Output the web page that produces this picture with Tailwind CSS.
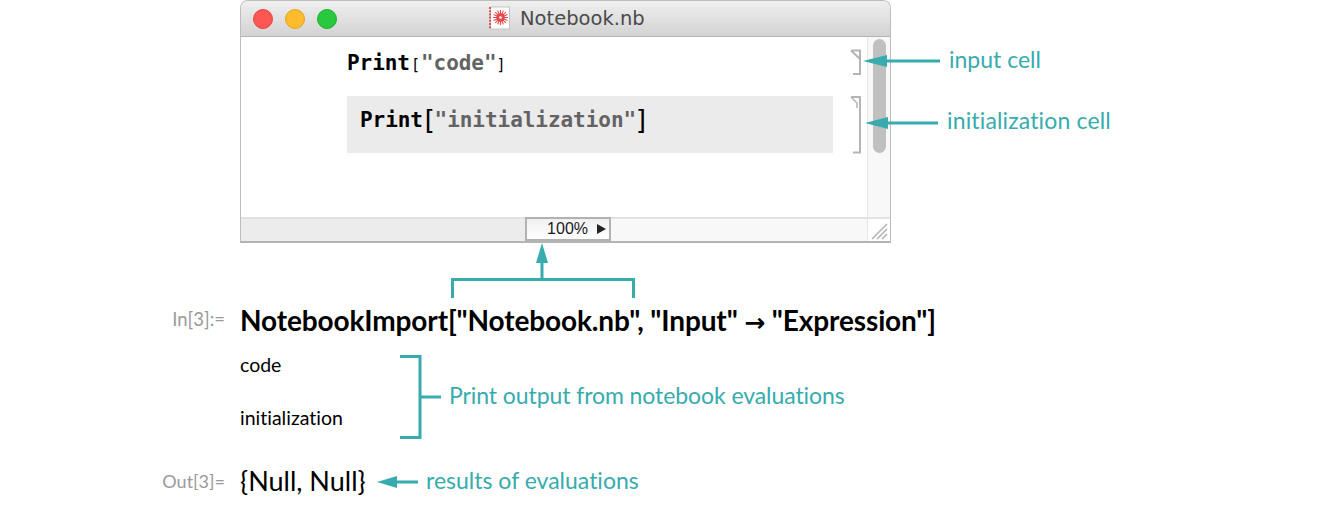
<!DOCTYPE html>
<html lang="en">
<head>
    <meta charset="UTF-8">
    <title>NotebookImport</title>
    <script src="https://cdn.jsdelivr.net/npm/@tailwindcss/browser@4"></script>
</head>
<body class="bg-white">
    <div class="relative w-[1340px] h-[510px] overflow-hidden font-['Lato',sans-serif] [font-variant-ligatures:none]">

        <!-- notebook window -->
        <div class="ml-[240px] w-[651px] h-[243px] flex flex-col border border-[#bdbdbd] border-b-2 border-b-[#b4b4b4] rounded-t-[8px] overflow-hidden">
            <div class="relative h-[36px] shrink-0 flex items-center pl-[12px] gap-[12px] bg-gradient-to-b from-[#efefef] to-[#d3d3d3] border-b border-[#b5b5b5]">
                <div class="w-[20px] h-[20px] rounded-full bg-[#fc5753] border border-[#e5443f]"></div>
                <div class="w-[20px] h-[20px] rounded-full bg-[#fdbc2e] border border-[#e3a41f]"></div>
                <div class="w-[20px] h-[20px] rounded-full bg-[#28c83f] border border-[#1eae32]"></div>
                <div class="absolute left-[248px] top-[5px] flex items-center gap-[9px]">
                    <svg width="22" height="24" viewBox="0 0 22 24">
                        <rect x="1.5" y="1" width="19" height="22" fill="#fff" stroke="#c4c4c4"/>
                        <line x1="1" y1="1" x2="1" y2="23" stroke="#e0262b" stroke-width="1.5" stroke-dasharray="2 1.2"/>
                        <g stroke="#e4474a" stroke-width="1.1">
                            <line x1="11.500" y1="4" x2="11.500" y2="19"/>
                            <line x1="4" y1="11.500" x2="19" y2="11.500"/>
                            <line x1="6.200" y1="6.200" x2="16.800" y2="16.800"/>
                            <line x1="16.800" y1="6.200" x2="6.200" y2="16.800"/>
                            <line x1="8.600" y1="4.600" x2="14.400" y2="18.400"/>
                            <line x1="14.400" y1="4.600" x2="8.600" y2="18.400"/>
                            <line x1="4.600" y1="8.600" x2="18.400" y2="14.400"/>
                            <line x1="18.400" y1="8.600" x2="4.600" y2="14.400"/>
                        </g>
                        <circle cx="11.500" cy="11.500" r="3.500" fill="none" stroke="#e4474a" stroke-width="1.500"/>
                        <circle cx="11.500" cy="11.500" r="1.300" fill="#fff"/>
                    </svg>
                    <span class="mt-[2px] text-[19.500px] leading-none text-[#4a4a4a] font-['DejaVu_Sans',sans-serif]">Notebook.nb</span>
                </div>
            </div>

            <div class="flex flex-1 min-h-0">
                <div class="relative flex-1 pl-[106px] font-['DejaVu_Sans_Mono',monospace] font-bold text-[21px] tracking-[-0.05px]">
                    <div class="h-[59px] flex items-center pb-[6px] text-black">
                        <span>Print</span><span class="text-[15px] font-normal mt-[3px] ml-[1px] mr-[1px]">[</span><span class="text-[#636363]">"code"</span><span class="text-[15px] font-normal mt-[3px]">]</span>
                    </div>
                    <div class="w-[486px] h-[57px] bg-[#ebebeb] flex items-center pl-[13px] pb-[8px] text-black">
                        <span>Print</span><span class="font-normal text-[26px] mx-[-2px]">[</span><span class="text-[#636363]">"initialization"</span><span class="font-normal text-[26px] -ml-[2px]">]</span>
                    </div>
                    <!-- cell brackets -->
                    <svg class="absolute left-[608px] top-[10px]" width="14" height="110" fill="none" stroke="#b4b4b4" stroke-width="2">
                        <path d="M2 3.500H11V27H4"/>
                        <path d="M2 3.500L11 12"/>
                        <path d="M2 50H11V105.500H4"/>
                        <path d="M2 50L8 56V61" stroke-width="1.500"/>
                    </svg>
                </div>
                <div class="w-[23px] shrink-0 bg-[#f8f8f8] border-l border-[#e6e6e6] pl-[5px] pt-[2px]">
                    <div class="w-[13px] h-[114px] rounded-full bg-[#c0c0c0]"></div>
                </div>
            </div>

            <div class="h-[24px] shrink-0 flex border-t-2 border-[#e2e2e2]">
                <div class="w-[284px] bg-[#ececec]"></div>
                <div class="w-[86px] -mt-[2px] flex items-center justify-end pr-[3px] gap-[9px] border-2 border-[#b2b2b2] bg-gradient-to-b from-[#f0f0f0] to-[#fff] text-[16px] leading-none text-[#1a1a1a] font-['Liberation_Sans',sans-serif]">
                    <span>100%</span>
                    <svg width="9" height="10" viewBox="0 0 9 10"><path d="M0 0L9 5L0 10Z" fill="#222"/></svg>
                </div>
                <div class="flex-1 bg-[#f8f8f8]"></div>
                <div class="w-[23px] bg-white border-l border-[#e6e6e6]">
                    <svg width="22" height="22" fill="none" stroke="#b0b0b0" stroke-width="1.500">
                        <path d="M4 20L19 5M9 20L19 10M14 20L19 15"/>
                    </svg>
                </div>
            </div>
        </div>

        <!-- NotebookImport input and output -->
        <div class="text-black">
            <div class="mt-[57px] h-[40px] flex items-center">
                <div class="w-[225px] text-right text-[18.500px] text-[#9a9a9a]">In[3]:=</div>
                <div class="ml-[15px] text-[28px] font-bold tracking-[-0.12px] whitespace-nowrap">NotebookImport["Notebook.nb", "Input" <span class="font-['DejaVu_Sans',sans-serif] text-[25px]">→</span> "Expression"]</div>
            </div>
            <div class="mt-[10px] h-[30px] flex items-center pl-[240px] text-[19.500px]">code</div>
            <div class="mt-[23px] h-[30px] flex items-center pl-[240px] text-[19.500px]">initialization</div>
            <div class="mt-[28px] h-[40px] flex items-center">
                <div class="w-[225px] text-right text-[18px] text-[#9a9a9a]">Out[3]=</div>
                <div class="ml-[15px] text-[27px]">{Null, Null}</div>
            </div>
        </div>

        <!-- annotations -->
        <svg class="absolute left-0 top-0" width="1340" height="510" fill="none" stroke="#37abae" stroke-width="3">
            <path d="M884 61H940"/>
            <path d="M863 61L887 55V67Z" fill="#37abae" stroke="none"/>
            <path d="M885 123H938"/>
            <path d="M865 123L888 117V129Z" fill="#37abae" stroke="none"/>
            <path d="M542 260V279"/>
            <path d="M542 243L548 263H536Z" fill="#37abae" stroke="none"/>
            <path d="M452.500 298V279.500H633.500V298"/>
            <path d="M400 356.500H420V437.500H400"/>
            <path d="M420 397H441"/>
            <path d="M396 482H418"/>
            <path d="M377 482L397 476V488Z" fill="#37abae" stroke="none"/>
        </svg>
        <span class="absolute left-[949px] top-[43px] text-[23px] leading-[32px] text-[#37abae] whitespace-nowrap">input cell</span>
        <span class="absolute left-[947px] top-[104px] text-[23px] leading-[32px] tracking-[0.15px] text-[#37abae] whitespace-nowrap">initialization cell</span>
        <span class="absolute left-[449px] top-[379px] text-[23px] leading-[32px] tracking-[-0.08px] text-[#37abae] whitespace-nowrap">Print output from notebook evaluations</span>
        <span class="absolute left-[426px] top-[464px] text-[23px] leading-[32px] text-[#37abae] whitespace-nowrap">results of evaluations</span>
    </div>
</body>
</html>
